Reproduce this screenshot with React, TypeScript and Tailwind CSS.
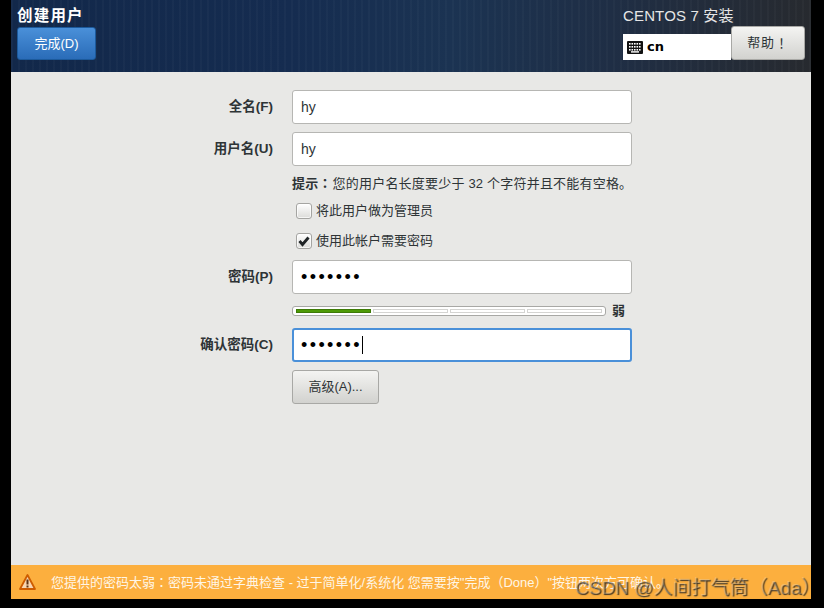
const cjk = "font-['Liberation_Sans','Noto_Sans_CJK_SC',sans-serif]";
// centred full-width punctuation, as in the installer's font
const punct = "font-['Noto_Sans_CJK_TC',sans-serif]";

const Row = ({ label, children }: { label?: string; children: React.ReactNode }) => (
  <div className="flex items-center">
    <div className="w-[262px] pt-px text-right text-[13.5px] font-semibold text-[#2e3436]">{label}</div>
    <div className="ml-[19px]">{children}</div>
  </div>
);

const Field = ({ value, focused, dots, caret }: { value: string; focused?: boolean; dots?: boolean; caret?: boolean }) => (
  <div
    className={`flex h-[34px] w-[340px] items-center rounded-[3px] bg-white ${
      focused ? 'border-2 border-[#4a90d9] pl-[7px]' : 'border border-[#b6b6b3] pl-[8px]'
    }`}
  >
    <span className={dots ? 'text-[18px] leading-[18px] tracking-[2.4px] text-black' : 'text-[14px] text-[#2e3436]'}>{value}</span>
    {caret && <span className="h-[18px] w-px bg-black" />}
  </div>
);

const Check = ({ checked, label }: { checked?: boolean; label: string }) => (
  <div className="ml-[4px] flex items-center gap-[4px]">
    <div className="flex h-[16px] w-[16px] items-center justify-center rounded-[3px] border border-[#a5a5a2] bg-gradient-to-b from-white to-[#dcdcd9] shadow-[inset_0_0_0_1px_rgba(255,255,255,0.7)]">
      {checked && (
        <svg width="12" height="12" viewBox="0 0 12 12">
          <path d="M1.5 6 L4.5 9.5 L10.5 2.5" fill="none" stroke="#1f2426" strokeWidth="2.8" />
        </svg>
      )}
    </div>
    <span className="text-[13px] leading-[18px] text-[#2e3436]">{label}</span>
  </div>
);

const KeyboardIcon = () => (
  <svg width="16" height="13" viewBox="0 0 16 13">
    <rect width="16" height="13" rx="1" fill="#111" />
    {[2, 5, 8].map((y) =>
      [2, 4.5, 7, 9.5, 12].map((x) => <rect key={`${x}-${y}`} x={x} y={y} width="1.6" height="1.6" fill="#fff" />),
    )}
    <rect x="4" y="10.2" width="8" height="1.4" fill="#fff" />
  </svg>
);

const WarningIcon = () => (
  <svg width="17" height="16" viewBox="0 0 17 16">
    <path d="M8.5 1 L16 15 H1 Z" fill="#f9d6b0" stroke="#ce5c00" strokeWidth="1.8" strokeLinejoin="round" />
    <path d="M8.5 5.5 V10.5" stroke="#5c3317" strokeWidth="2" />
    <rect x="7.5" y="11.5" width="2" height="2" fill="#5c3317" />
  </svg>
);

export default function App() {
  return (
    <div className={`relative h-[608px] w-[824px] overflow-hidden bg-black pl-[11px] pr-[13px] pb-[9px] ${cjk}`}>
      <div className="flex h-full flex-col bg-[#e8e8e6]">
        {/* Header */}
        <div className="flex h-[72px] justify-between bg-[repeating-linear-gradient(90deg,rgba(255,255,255,0.025)_0,rgba(255,255,255,0.025)_2px,transparent_2px,transparent_7px),linear-gradient(90deg,#12284a_0%,#152c50_35%,#1b3352_55%,#1f2e45_75%,#272a2f_100%)]">
          <div className="pl-[6px] pt-[6px]">
            <div className="text-[15.5px] font-bold leading-[19px] tracking-[1.2px] text-white">创建用户</div>
            <div className="mt-[2px] flex h-[33px] w-[79px] items-center justify-center rounded-[3px] border border-[#1c5a9c] bg-gradient-to-b from-[#4a90d9] to-[#2a6cb8] text-[13px] text-white">
              完成(D)
            </div>
          </div>
          <div className="flex flex-col items-start pr-[6px] pt-[6px]">
            <div className="text-[15px] leading-[19px] tracking-[0.15px] text-[#e6e6e6]">CENTOS 7 安装</div>
            <div className="mt-[1px] flex items-end">
              <div className="flex h-[26px] w-[108px] items-center gap-[4px] bg-white pl-[4px]">
                <KeyboardIcon />
                <span className="text-[13px] font-bold text-black font-['DejaVu_Sans',sans-serif]">cn</span>
              </div>
              <div className="flex h-[34px] w-[74px] items-center justify-center rounded-[3px] border border-[#a8a8a5] bg-gradient-to-b from-[#f4f4f2] to-[#d2d2cf] text-[13px] tracking-[0.8px] text-[#2e3436]">
                帮助<span className={punct}>！</span>
              </div>
            </div>
          </div>
        </div>

        {/* Form */}
        <div className="flex flex-1 flex-col pt-[18px]">
          <Row label="全名(F)"><Field value="hy" /></Row>
          <div className="mt-[8px]"><Row label="用户名(U)"><Field value="hy" /></Row></div>
          <div className="mt-[8px]">
            <Row>
              <div className="text-[13px] leading-[17px] tracking-[0.2px] text-[#2e3436]">
                <b>提示<span className={`${punct} mr-px`}>：</span></b>您的用户名长度要少于 32 个字符并且不能有空格。
              </div>
            </Row>
          </div>
          <div className="mt-[10px]"><Row><Check label="将此用户做为管理员" /></Row></div>
          <div className="mt-[12px]"><Row><Check checked label="使用此帐户需要密码" /></Row></div>
          <div className="mt-[10px]"><Row label="密码(P)"><Field value="•••••••" dots /></Row></div>
          <div className="mt-[12px]">
            <Row>
              <div className="flex items-center gap-[6px]">
                <div className="flex h-[10px] w-[314px] gap-[2px] rounded-[3px] border border-[#a8a8a5] bg-white px-[3px] py-[2px]">
                  <div className="h-[4px] flex-1 border border-[#3d7a06] bg-[#4e9a06]" />
                  <div className="h-[4px] flex-1 border border-[#d4d4d2] bg-white" />
                  <div className="h-[4px] flex-1 border border-[#d4d4d2] bg-white" />
                  <div className="h-[4px] flex-1 border border-[#d4d4d2] bg-white" />
                </div>
                <span className="text-[13px] font-semibold leading-[10px] text-[#2e3436]">弱</span>
              </div>
            </Row>
          </div>
          <div className="mt-[12px]"><Row label="确认密码(C)"><Field value="•••••••" dots focused caret /></Row></div>
          <div className="mt-[8px]">
            <Row>
              <div className="flex h-[34px] w-[87px] items-center justify-center rounded-[3px] border border-[#a8a8a5] bg-gradient-to-b from-[#f4f4f2] to-[#d2d2cf] text-[13px] text-[#2e3436]">
                高级(A)...
              </div>
            </Row>
          </div>
        </div>

        {/* Warning bar */}
        <div className="flex h-[34px] items-center bg-[#fcaf3e] pl-[8px]">
          <WarningIcon />
          <span className="ml-[15px] whitespace-nowrap text-[13px] text-[#fff6e6]">
            您提供的密码太弱<span className={punct}>：</span>密码未通过字典检查 - 过于简单化/系统化 您需要按"完成（Done）"按钮两次方可确认。
          </span>
        </div>
      </div>

      {/* CSDN watermark */}
      <div className="absolute left-[575px] top-[575px] whitespace-nowrap text-[19px] leading-[26px] text-white/25 [text-shadow:1px_1px_1px_rgba(30,30,30,0.85)]">
        CSDN @人间打气筒（Ada）
      </div>
    </div>
  );
}
